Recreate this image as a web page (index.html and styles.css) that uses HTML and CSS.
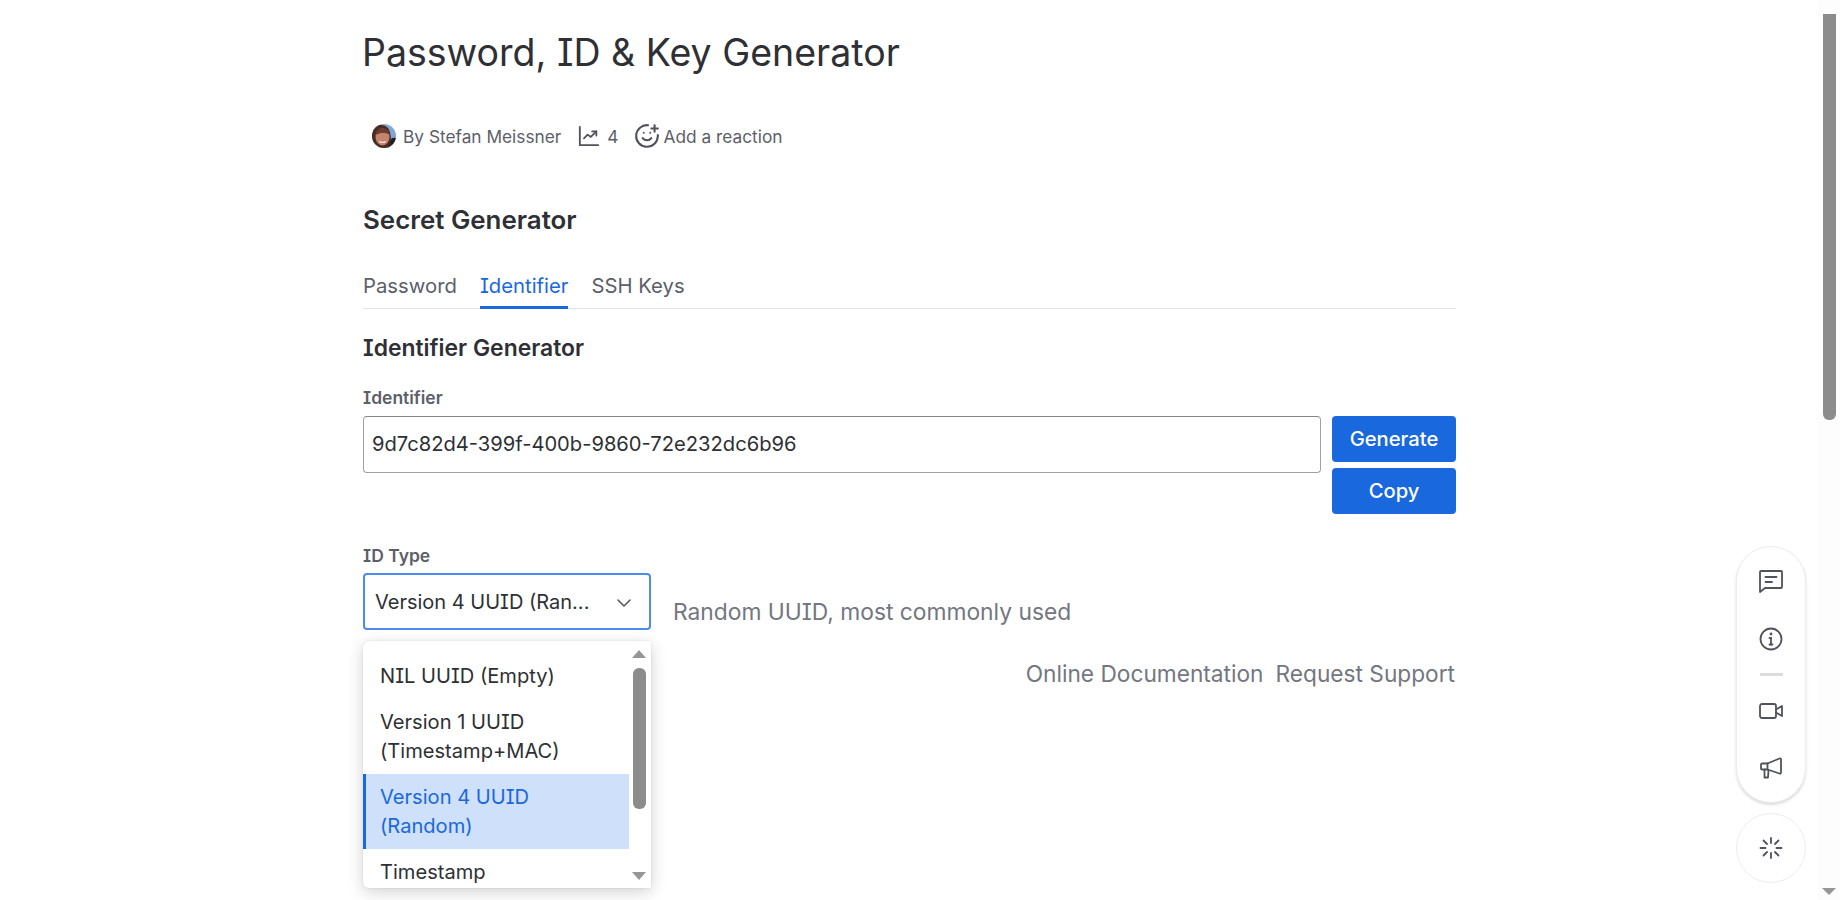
FILE: index.html
```html
<!DOCTYPE html>
<html lang="en">
<head>
<meta charset="utf-8">
<title>Password, ID &amp; Key Generator</title>
<link rel="stylesheet" href="styles.css">
</head>
<body>
<div class="viewport">
  <main class="page">
    <h1 class="title">Password, ID &amp; Key Generator</h1>
    <div class="meta">
      <span class="meta-item author">
        <svg class="avatar" viewBox="0 0 24 24">
          <defs><clipPath id="av"><circle cx="12" cy="12" r="12"/></clipPath></defs>
          <g clip-path="url(#av)">
            <rect width="24" height="24" fill="#7fa6d6"/>
            <path d="M24 14c-3-1-5 0-6 3l-2 7h8z" fill="#1f1f24"/>
            <path d="M0 24V5Q4 0 10 1q6 .5 8 7l1 6-2 10z" fill="#4a2b22"/>
            <ellipse cx="10.500" cy="13" rx="7" ry="8.500" fill="#c4836a"/>
            <path d="M3.500 11C4 6 8 4 12 4.500s5.500 3 5.500 6c-3-2-9-2.500-14 .5z" fill="#6b3d2e"/>
            <path d="M6.500 16.500c2 1.500 6 1.500 8 0l-1.500 2.500h-5z" fill="#efdcd2"/>
          </g>
        </svg>
        By Stefan Meissner
      </span>
      <span class="meta-item views">
        <svg class="icon" viewBox="0 0 24 24"><path d="M2 2v20h20"/><path d="m6.500 14.500 4-4 3.500 2.500 6-6"/><path d="M15.500 7H20v4.500"/></svg>
        4
      </span>
      <span class="meta-item reaction">
        <svg class="icon-smile" viewBox="0 0 24 24"><path d="M22 11v1a10 10 0 1 1-9-10"/><path d="M8 14s1.500 2 4 2 4-2 4-2"/><line x1="9" y1="9" x2="9.010" y2="9"/><line x1="15" y1="9" x2="15.010" y2="9"/><path d="M16 5h6"/><path d="M19 2v6"/></svg>
        Add a reaction
      </span>
    </div>

    <h2 class="section-title">Secret Generator</h2>
    <nav class="tabs">
      <span class="tab">Password</span>
      <span class="tab tab-active">Identifier</span>
      <span class="tab">SSH Keys</span>
    </nav>

    <h3 class="sub-title">Identifier Generator</h3>
    <label class="field-label">Identifier</label>
    <div class="id-row">
      <div class="id-input">9d7c82d4-399f-400b-9860-72e232dc6b96</div>
      <div class="id-actions">
        <button class="btn">Generate</button>
        <button class="btn">Copy</button>
      </div>
    </div>

    <label class="field-label type-label">ID Type</label>
    <div class="type-row">
      <div class="select-wrap">
        <div class="select">
          <span class="select-value">Version 4 UUID (Ran...</span>
          <svg class="chevron" viewBox="0 0 24 24"><path d="m6 9 6 6 6-6"/></svg>
        </div>
        <div class="dropdown">
          <ul class="options">
            <li class="option">NIL UUID (Empty)</li>
            <li class="option">Version 1 UUID (Timestamp+MAC)</li>
            <li class="option option-selected">Version 4 UUID (Random)</li>
            <li class="option">Timestamp</li>
          </ul>
          <div class="list-scroll">
            <span class="arrow-up"></span>
            <span class="list-thumb"></span>
            <span class="arrow-down"></span>
          </div>
        </div>
      </div>
      <span class="helper">Random UUID, most commonly used</span>
    </div>

    <div class="links">
      <a class="link">Online Documentation</a>
      <a class="link">Request Support</a>
    </div>
  </main>

  <div class="page-scroll">
    <span class="page-thumb"></span>
    <span class="page-arrow"></span>
  </div>
</div>

<aside class="floating">
  <div class="pill">
    <svg class="icon-lg" viewBox="0 0 24 24"><path d="M1 3a1 1 0 0 1 1-1h20a1 1 0 0 1 1 1v15a1 1 0 0 1-1 1H6l-5 4z"/><path d="M6.500 8h11"/><path d="M6.500 13h6.500"/></svg>
    <svg class="icon-lg info" viewBox="0 0 24 24"><circle cx="12" cy="12" r="10.500"/><path d="M12 11v6.500"/><path d="M10.500 11H12"/><path d="M10.500 17.500h3"/><path d="M12 7h.01" stroke-width="2.800"/></svg>
    <span class="pill-sep"></span>
    <svg class="icon-lg" viewBox="0 0 24 24"><rect x="1" y="5" width="16" height="14" rx="2"/><path d="m17 10.500 6-3.500v10l-6-3.500"/></svg>
    <svg class="icon-lg" viewBox="0 0 24 24"><path d="M2 8.500a1 1 0 0 1 1-1h5.500l12-5a1 1 0 0 1 1.500 1v13a1 1 0 0 1-1.500 1l-12-4H3a1 1 0 0 1-1-1z"/><path d="M8.500 7.500v6"/><path d="M5.500 13.500v8h3.500l.5-7"/></svg>
  </div>
  <div class="round">
    <svg class="icon-lg" viewBox="0 0 24 24"><path d="M12 2v5"/><path d="m19.500 4.500-3.500 3.500"/><path d="M22.500 12h-5"/><path d="m19.500 19.500-3.500-3.500"/><path d="M12 17v5"/><path d="m4.500 19.500 3.500-3.500"/><path d="M1.500 12h5"/><path d="m4.500 4.500 3.500 3.500"/></svg>
  </div>
</aside>
</body>
</html>
```

FILE: styles.css
```css
* { box-sizing: border-box; }
html, body { margin: 0; height: 100%; overflow: hidden; background: #fff; }
body { font-family: Inter, "Noto Sans", sans-serif; color: #2e2f33; font-feature-settings: "cv08" 1; }

.viewport { display: flex; height: 900px; }
.page { flex: 1; min-width: 0; padding: 0 362px 0 363px; }

.title { margin: 30px 0 0 -1px; font-size: 37.500px; line-height: 45px; font-weight: 400; color: #2e3035; }

.meta { display: flex; align-items: center; margin: 47px 0 0 9px; height: 28px; font-size: 17.300px; color: #5c5e68; }
.meta-item { display: inline-flex; align-items: center; }
.avatar { width: 24px; height: 24px; margin-right: 7px; }
.icon { width: 22px; height: 22px; fill: none; stroke: #50525c; stroke-width: 2; stroke-linecap: round; stroke-linejoin: round; margin-right: 7px; }
.icon-smile { width: 26px; height: 26px; fill: none; stroke: #50525c; stroke-width: 1.900; stroke-linecap: round; stroke-linejoin: round; margin-right: 4px; }
.views { margin-left: 17px; }
.reaction { margin-left: 15px; }

.section-title { margin: 55px 0 0; font-size: 25.900px; line-height: 30px; font-weight: 600; color: #2e3035; }

.tabs { display: flex; gap: 23px; margin-top: 35px; border-bottom: 1px solid #e2e3e6; height: 39px; }
.tab { font-size: 20.300px; line-height: 28px; color: #5c5e68; height: 39px; padding-top: 2px; }
.tab-active { color: #1a68dd; border-bottom: 3px solid #1a68dd; }

.sub-title { margin: 25px 0 0; font-size: 22.900px; line-height: 28px; font-weight: 600; color: #2e3035; }

.field-label { display: block; font-size: 17.500px; line-height: 20px; font-weight: 600; color: #5c5e68; margin-top: 26px; }

.id-row { display: flex; gap: 11px; margin-top: 8px; align-items: flex-start; }
.id-input { flex: 1; height: 57px; border: 1px solid #9fa1a9; border-top-color: #82848e; border-radius: 4px; padding: 0 8px; font-size: 20.150px; line-height: 53px; color: #2e3035; }
.id-actions { display: flex; flex-direction: column; gap: 6px; width: 124px; }
.btn { height: 46px; border: 0; border-radius: 4px; background: #1a68dd; color: #fff; font: 500 20.200px Inter, sans-serif; font-feature-settings: "cv08" 1; padding: 0 0 2px; }

.type-label { margin-top: 32px; }
.type-row { display: flex; margin-top: 7px; align-items: flex-start; }
.select-wrap { position: relative; width: 288px; }
.select { height: 57px; border: 2px solid #4d8cee; border-radius: 4px; display: flex; align-items: center; justify-content: space-between; padding: 0 13px 0 10px; }
.select-value { font-size: 20px; color: #2e3035; white-space: nowrap; }
.chevron { width: 24px; height: 24px; fill: none; stroke: #50525c; stroke-width: 1.500; stroke-linecap: round; stroke-linejoin: round; margin-top: 2px; }
.helper { margin: 25px 0 0 22px; font-size: 22.800px; line-height: 28px; color: #747680; }

.dropdown { position: absolute; left: 0; top: 68px; width: 288px; height: 247px; background: #fff; border-radius: 6px 0 0 6px; box-shadow: 0 0 2px rgba(0,0,0,.12), 0 4px 16px rgba(0,0,0,.18); overflow: hidden; display: flex; }
.options { list-style: none; margin: 12px 0 0; padding: 0; width: 266px; flex: none; }
.option { font-size: 20.100px; line-height: 28.800px; padding: 8.700px 12px 8.700px 17px; color: #2e3035; }
.option-selected { background: #cfe0fb; color: #1a68dd; border-left: 3px solid #1a68dd; padding-left: 14px; padding-right: 60px; }
.list-scroll { position: relative; flex: 1; }
.list-thumb { position: absolute; left: 4px; top: 27px; width: 12.500px; height: 141px; border-radius: 6px; background: #8c8c8c; }
.arrow-up, .arrow-down { position: absolute; left: 3px; width: 0; height: 0; border-left: 7px solid transparent; border-right: 7px solid transparent; }
.arrow-up { top: 9px; border-bottom: 8px solid #969696; }
.arrow-down { bottom: 8px; border-top: 8px solid #969696; }

.links { display: flex; justify-content: flex-end; gap: 12px; margin-top: 30px; padding-right: 1px; font-size: 22.700px; line-height: 28px; color: #747680; }

.page-scroll { position: relative; width: 22px; flex: none; background: #fdfdfd; }
.page-thumb { position: absolute; left: 5px; top: 14px; width: 12.500px; height: 406px; background: #8c8c8c; border-radius: 0 0 6px 6px; }
.page-arrow { position: absolute; left: 4px; bottom: 5px; width: 0; height: 0; border-left: 7px solid transparent; border-right: 7px solid transparent; border-top: 7px solid #969696; }

.floating { position: fixed; left: 1736px; top: 546px; width: 70px; display: flex; flex-direction: column; gap: 10px; }
.pill { height: 257px; border-radius: 35px; background: #fff; border: 1px solid #ececee; box-shadow: 0 2px 3px rgba(0,0,0,.14); display: flex; flex-direction: column; align-items: center; padding-top: 22px; }
.icon-lg { width: 24px; height: 24px; fill: none; stroke: #50525c; stroke-width: 1.800; stroke-linecap: round; stroke-linejoin: round; flex: none; }
.pill > .icon-lg + .icon-lg { margin-top: 33px; }
.pill > .icon-lg + .info { margin-top: 34px; }
.pill-sep { width: 23px; height: 3px; background: #dcdcde; margin: 22px 0 23px; flex: none; }
.pill-sep + .icon-lg { margin-top: 0; }
.round { height: 70px; border-radius: 50%; background: #fff; border: 1px solid #ececee; display: flex; align-items: center; justify-content: center; }
```
